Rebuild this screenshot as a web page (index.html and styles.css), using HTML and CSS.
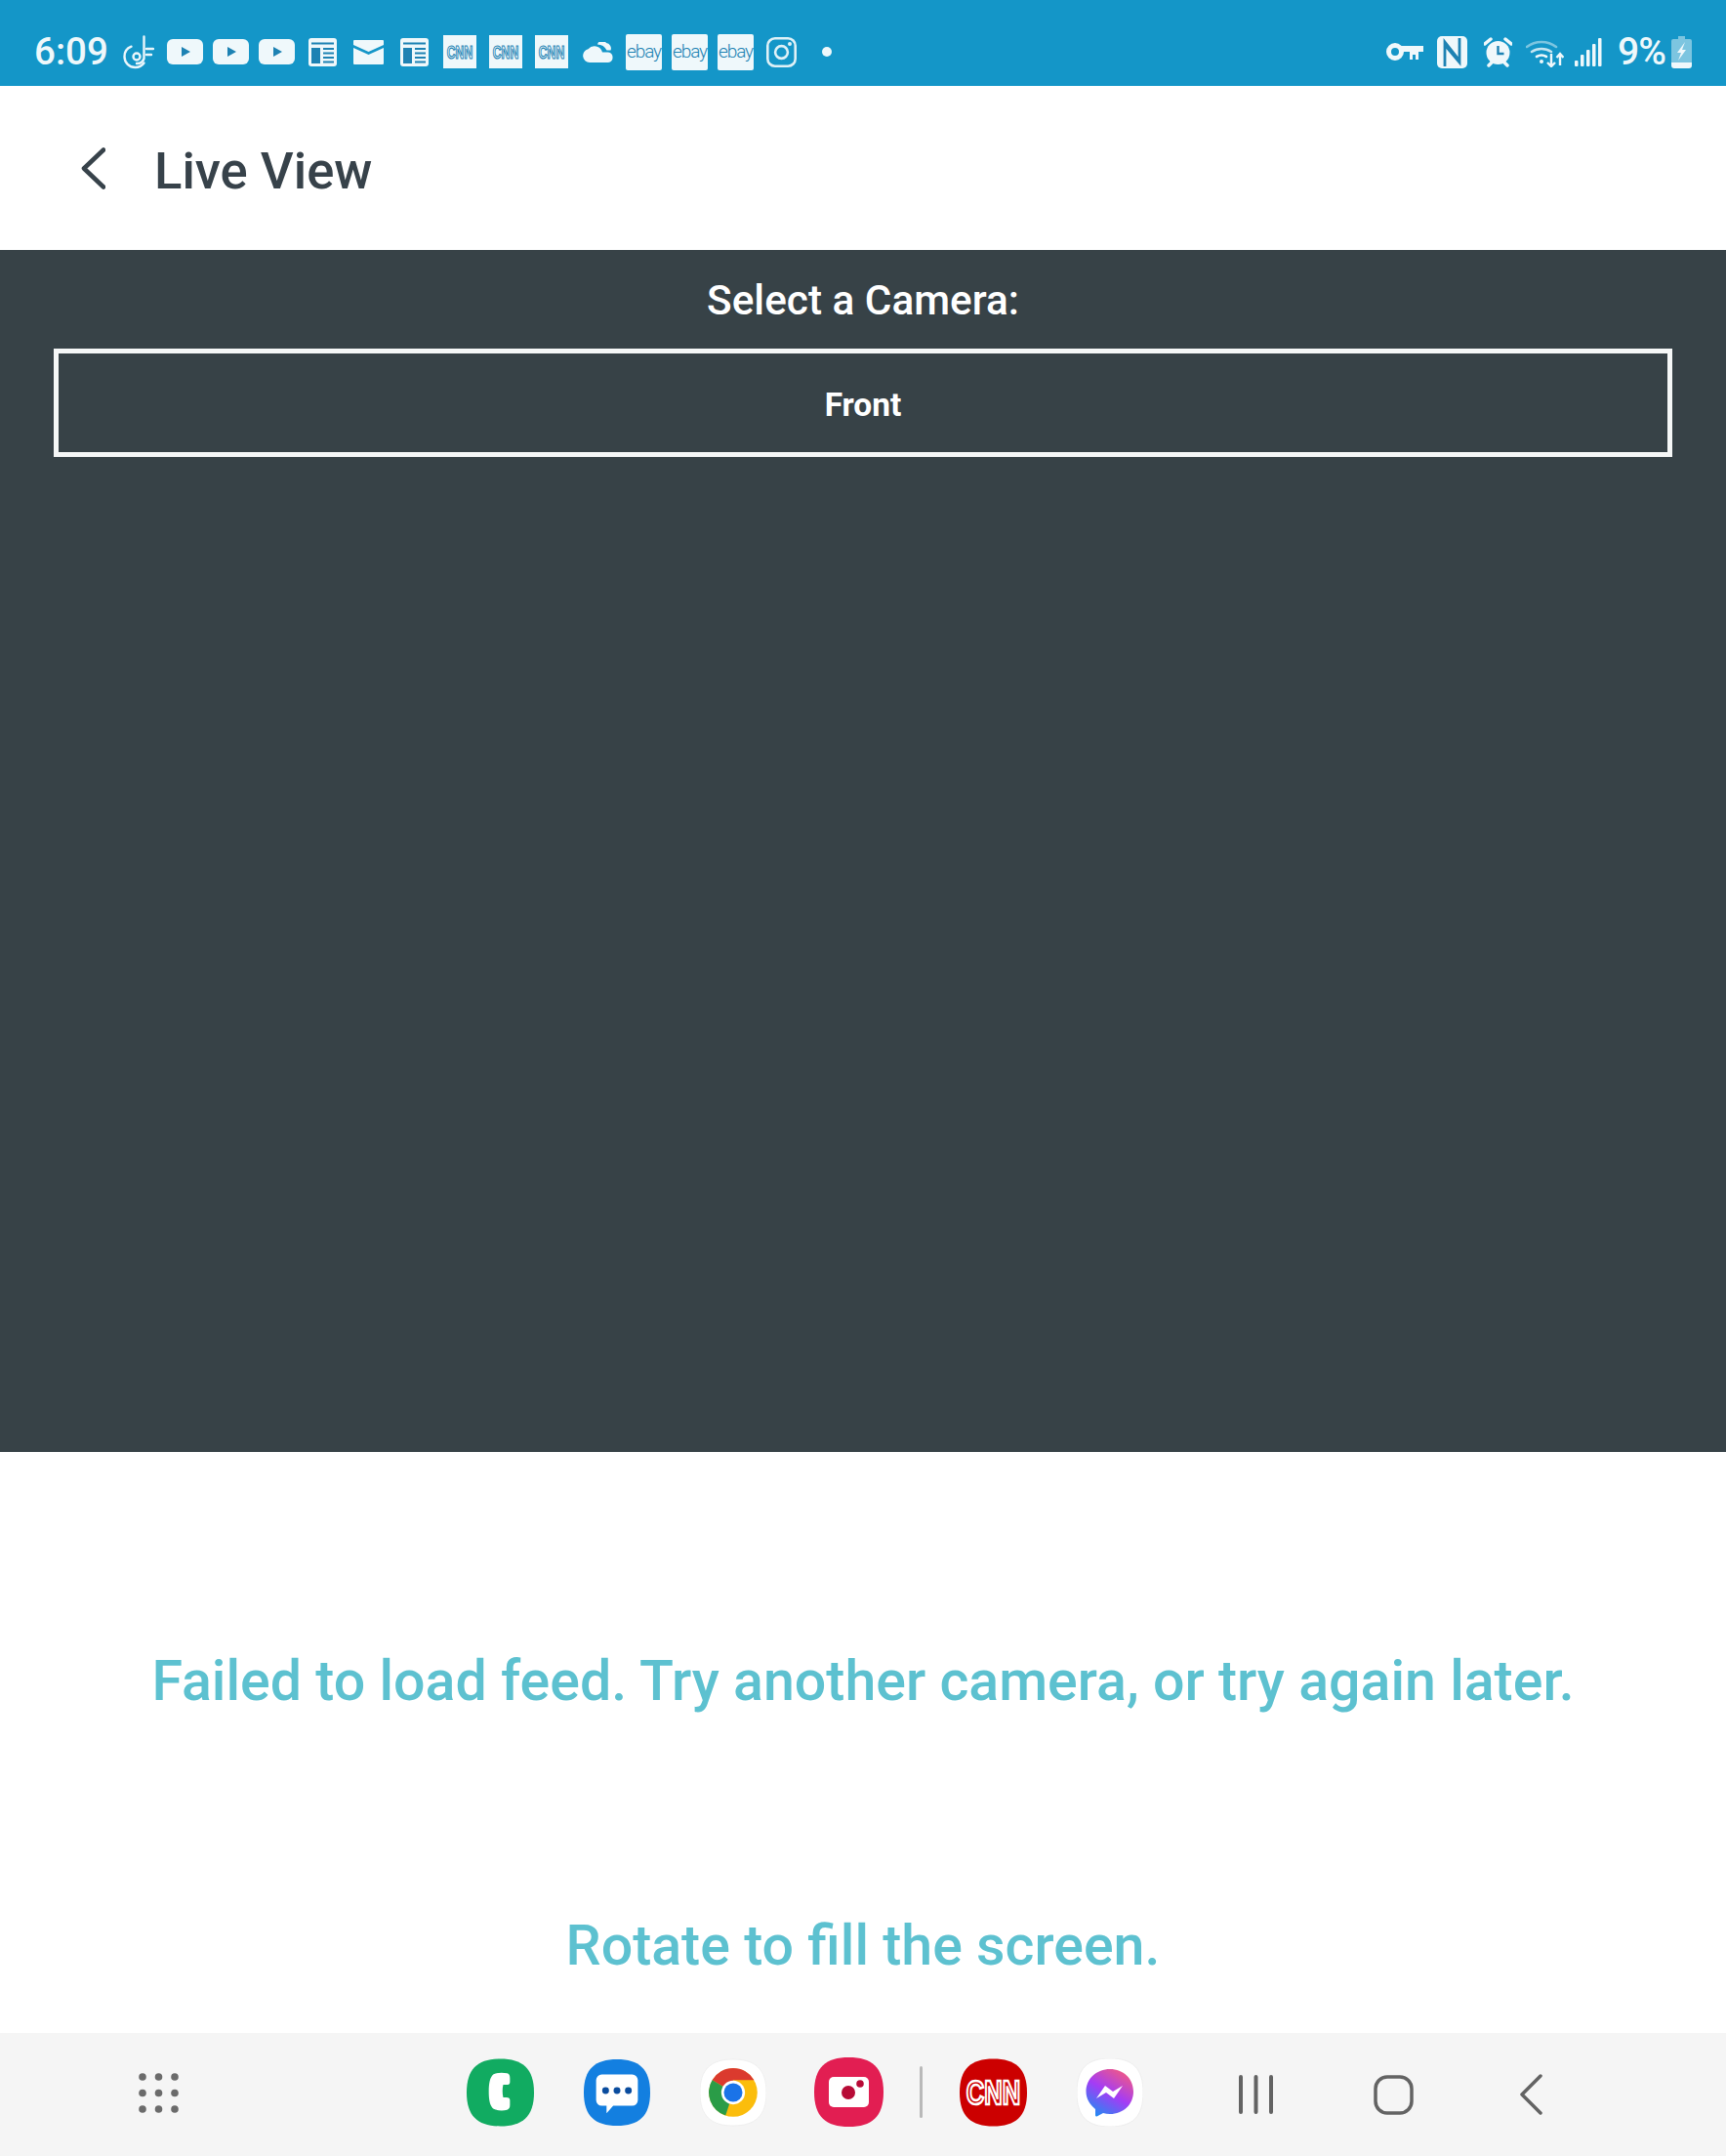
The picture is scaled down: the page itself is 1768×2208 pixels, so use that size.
FILE: index.html
```html
<!DOCTYPE html>
<html lang="en">
<head>
<meta charset="utf-8">
<title>Live View</title>
<link rel="stylesheet" href="styles.css">
</head>
<body>
<div class="page">
  <header class="status">
    <div class="status-left">
      <span class="time">6:09</span>
      <svg class="si tiktok" viewBox="0 0 32 35"><g fill="none" stroke="#eaf6fb" stroke-width="2.400" stroke-linecap="round"><path d="M8.500 11.700A11 11 0 0 0 1.500 22A11 11 0 0 0 12.500 33A11 11 0 0 0 21.500 28.500"/><path d="M21.500 1.500V24A7.500 7.500 0 0 1 14 29"/><path d="M24 14h7M24 20h5"/><circle cx="14" cy="22" r="3.500"/></g></svg>
      <svg class="si yt" viewBox="0 0 37 26"><rect width="37" height="26" rx="6" fill="#eff8fb"/><path d="M15 8l9 5-9 5z" fill="#1d82b3"/></svg>
      <svg class="si yt g10" viewBox="0 0 37 26"><rect width="37" height="26" rx="6" fill="#eff8fb"/><path d="M15 8l9 5-9 5z" fill="#1d82b3"/></svg>
      <svg class="si yt g10" viewBox="0 0 37 26"><rect width="37" height="26" rx="6" fill="#eff8fb"/><path d="M15 8l9 5-9 5z" fill="#1d82b3"/></svg>
      <svg class="si news g14" viewBox="0 0 29 29"><rect width="29" height="29" rx="3" fill="#eff8fb"/><path d="M3 4.500h23v2H3zM3 10h9v16H3z" fill="#1d82b3"/><path d="M15 10h11v2H15zM15 14.500h11v2H15zM15 19h11v2H15zM15 23.500h11v2H15z" fill="#1d82b3"/></svg>
      <svg class="si mail g17" viewBox="0 0 31 25"><path d="M1 0h29a1 1 0 0 1 1 1v4L15.500 12 0 5V1a1 1 0 0 1 1-1zM0 8l15.500 7L31 8v16a1 1 0 0 1-1 1H1a1 1 0 0 1-1-1z" fill="#eff8fb"/></svg>
      <svg class="si news g17" viewBox="0 0 29 29"><rect width="29" height="29" rx="3" fill="#eff8fb"/><path d="M3 4.500h23v2H3zM3 10h9v16H3z" fill="#1d82b3"/><path d="M15 10h11v2H15zM15 14.500h11v2H15zM15 19h11v2H15zM15 23.500h11v2H15z" fill="#1d82b3"/></svg>
      <svg class="si cnn g15" viewBox="0 0 34 34"><rect width="34" height="34" fill="#eff8fb"/><text transform="translate(17 23.500) scale(.68 1)" text-anchor="middle" class="cnn-small">CNN</text></svg>
      <svg class="si cnn g13" viewBox="0 0 34 34"><rect width="34" height="34" fill="#eff8fb"/><text transform="translate(17 23.500) scale(.68 1)" text-anchor="middle" class="cnn-small">CNN</text></svg>
      <svg class="si cnn g13" viewBox="0 0 34 34"><rect width="34" height="34" fill="#eff8fb"/><text transform="translate(17 23.500) scale(.68 1)" text-anchor="middle" class="cnn-small">CNN</text></svg>
      <svg class="si cloud g15" viewBox="0 0 31 21"><path d="M15 2.500a5 5 0 0 1 9-1.500 5.500 5.500 0 0 1 4.500 7.500H24.500A11 11 0 0 0 15 2.500z" fill="#eff8fb"/><path d="M7 21a7 7 0 0 1-1.500-13.800A8.500 8.500 0 0 1 20 10.500h6a5.300 5.300 0 0 1 0 10.500z" fill="#eff8fb"/></svg>
      <span class="tile ebay g13">ebay</span>
      <span class="tile ebay g10">ebay</span>
      <span class="tile ebay g10">ebay</span>
      <svg class="si insta g13" viewBox="0 0 31 31"><g fill="none" stroke="#dff1f7" stroke-width="2.600"><rect x="1.300" y="1.300" width="28.400" height="28.400" rx="7.500"/><circle cx="15.500" cy="15.500" r="6.400"/></g><circle cx="24" cy="7" r="2" fill="#dff1f7"/></svg>
      <span class="dot"></span>
    </div>
    <div class="status-right">
      <svg class="si key" viewBox="0 0 38 18"><circle cx="9" cy="9" r="6.500" fill="none" stroke="#eff8fb" stroke-width="5"/><path d="M15 3h23v6h-5v8h-3v-5h-3v5h-3V9h-9z" fill="#eff8fb"/></svg>
      <svg class="si nfc" viewBox="0 0 31 33"><path d="M5 0h21a5 5 0 0 1 5 5v23a5 5 0 0 1-5 5H5a5 5 0 0 1-5-5V5a5 5 0 0 1 5-5z" fill="#eff8fb"/><path d="M8 31V6l15 19M23 2v25L8 9" fill="none" stroke="#1d82b3" stroke-width="2.800"/></svg>
      <svg class="si alarm" viewBox="0 0 29 31"><circle cx="14.500" cy="16" r="12" fill="#eff8fb"/><path d="M1 7l6-5M28 7l-6-5M5 29l3-3M24 29l-3-3" stroke="#eff8fb" stroke-width="3.500" stroke-linecap="round"/><path d="M14.500 9v8h6" fill="none" stroke="#1d82b3" stroke-width="2.400"/></svg>
      <svg class="si wifi" viewBox="0 0 39 31"><path d="M1 10a25 25 0 0 1 30 0" fill="none" stroke="#7cc5e0" stroke-width="2.600" stroke-linecap="round"/><path d="M6 15a18 18 0 0 1 20 0" fill="none" stroke="#c5e5f1" stroke-width="2.600" stroke-linecap="round"/><path d="M11 20a10 10 0 0 1 10 0" fill="none" stroke="#eff8fb" stroke-width="2.600" stroke-linecap="round"/><circle cx="16" cy="25" r="2" fill="#eff8fb"/><path d="M26 17v13M22 26l4 4 4-4M35 29V17M31.500 21l3.500-4 3.500 4" fill="none" stroke="#eff8fb" stroke-width="2.400"/></svg>
      <svg class="si signal" viewBox="0 0 28 29"><g fill="#eff8fb"><rect x="0" y="23" width="3.500" height="6" rx="1"/><rect x="6" y="17" width="3.500" height="12" rx="1"/><rect x="12" y="12" width="3.500" height="17" rx="1"/><rect x="18" y="6" width="3.500" height="23" rx="1"/><rect x="24" y="0" width="3.500" height="29" rx="1"/></g></svg>
      <span class="pct">9%</span>
      <svg class="si battery" viewBox="0 0 21 33"><path d="M7 0h7v3H7z" fill="#7cc5e0"/><path d="M2 3h17a2 2 0 0 1 2 2v22H0V5a2 2 0 0 1 2-2z" fill="#7cc5e0"/><path d="M0 27h21v3a3 3 0 0 1-3 3H3a3 3 0 0 1-3-3z" fill="#eff8fb"/><path d="M14 6l-8 11h4l-3 8 8-11h-4l3-8z" fill="#eff8fb"/></svg>
    </div>
  </header>

  <div class="appbar">
    <svg class="back" viewBox="0 0 25 43"><path d="M23 2.500L3 21.500 23 40.500" fill="none" stroke="#37424a" stroke-width="4.600" stroke-linecap="round" stroke-linejoin="round"/></svg>
    <h1 class="title">Live View</h1>
  </div>

  <section class="feed">
    <h2 class="feed-label">Select a Camera:</h2>
    <div class="select">Front</div>
  </section>

  <section class="messages">
    <p class="msg msg-fail">Failed to load feed. Try another camera, or try again later.</p>
    <p class="msg msg-rotate">Rotate to fill the screen.</p>
  </section>

  <nav class="navbar">
    <svg class="dots" viewBox="0 0 41 41"><g fill="#6b6b6b"><circle cx="4" cy="4" r="3.800"/><circle cx="20.500" cy="4" r="3.800"/><circle cx="37" cy="4" r="3.800"/><circle cx="4" cy="20.500" r="3.800"/><circle cx="20.500" cy="20.500" r="3.800"/><circle cx="37" cy="20.500" r="3.800"/><circle cx="4" cy="37" r="3.800"/><circle cx="20.500" cy="37" r="3.800"/><circle cx="37" cy="37" r="3.800"/></g></svg>
    <svg class="app app-phone" viewBox="0 0 70 70"><path d="M35 0C58 0 70 10 70 35S58 70 35 70 0 60 0 35 12 0 35 0z" fill="#11ab61"/><path d="M28 16c4-2 10-2 14-1 2 .5 3 2 3 5v4c0 2-1 3-4 3h-3c-1 4-1 9 0 13h3c3 0 4 1 4 3v5c0 3-1 4-3 5-4 1-10 1-14-1-4-3-5-10-5-18s1-15 5-18z" fill="#fff"/></svg>
    <svg class="app app-msg" viewBox="0 0 70 70"><path d="M35 0C58 0 70 10 70 35S58 70 35 70 0 60 0 35 12 0 35 0z" fill="#137fe0"/><path d="M19 16h32a6 6 0 0 1 6 6v21a6 6 0 0 1-6 6H31l-7 8v-8h-5a6 6 0 0 1-6-6V22a6 6 0 0 1 6-6z" fill="#fff"/><g fill="#0a4c9e"><circle cx="23" cy="33" r="3.600"/><circle cx="35" cy="33" r="3.600"/><circle cx="47" cy="33" r="3.600"/></g></svg>
    <svg class="app app-chrome" viewBox="0 0 70 70"><path d="M35 0C58 0 70 10 70 35S58 70 35 70 0 60 0 35 12 0 35 0z" fill="#fff" stroke="#eeeeee"/><circle cx="35" cy="35" r="25.500" fill="#fbbd0c"/><path d="M35 35L12.900 22A25.500 25.500 0 0 1 57.100 22H35z" fill="#db3a2e"/><path d="M12.900 22A25.500 25.500 0 0 0 27 59.300L35 35z" fill="#2a9c47"/><circle cx="35" cy="35" r="12.500" fill="#fff"/><circle cx="35" cy="35" r="9.800" fill="#1a73e8"/></svg>
    <svg class="app app-cam" viewBox="0 0 71 71"><path d="M35.500 0C59 0 71 10 71 35.500S59 71 35.500 71 0 61 0 35.500 12 0 35.500 0z" fill="#e21e52"/><rect x="15" y="20" width="41" height="31" rx="5" fill="#fff"/><circle cx="35" cy="36" r="7" fill="#b70b36"/><circle cx="47" cy="27" r="3.800" fill="#b70b36"/></svg>
    <span class="divider"></span>
    <svg class="app app-cnn" viewBox="0 0 70 70"><path d="M35 0C58 0 70 10 70 35S58 70 35 70 0 60 0 35 12 0 35 0z" fill="#cc0000"/><text transform="translate(35 47.500) scale(.74 1)" text-anchor="middle" class="cnn-big">CNN</text></svg>
    <svg class="app app-messenger" viewBox="0 0 68 70"><defs><linearGradient id="mg" x1="0.200" y1="1" x2="0.800" y2="0"><stop offset="0" stop-color="#1f8cf2"/><stop offset="0.500" stop-color="#a43cf5"/><stop offset="1" stop-color="#f45a80"/></linearGradient></defs><path d="M34 0C57 0 68 10 68 35S57 70 34 70 0 60 0 35 11 0 34 0z" fill="#fff" stroke="#eeeeee"/><path d="M34 11c13.500 0 24 9.600 24 23S47.500 57 34 57c-2.500 0-4.800-.3-7-1l-6 3.300c-1 .5-2 0-2-1.300v-6C13 47 9.500 41 9.500 34 9.500 20.600 20.500 11 34 11z" fill="url(#mg)"/><path d="M20 41l9-13 8 6 10-6-9 13-8-6z" fill="#fff"/></svg>
    <svg class="ctl ctl-recent" viewBox="0 0 37 40"><path d="M3 2v36M18.500 2v36M34 2v36" stroke="#636363" stroke-width="4" stroke-linecap="round"/></svg>
    <svg class="ctl ctl-home" viewBox="0 0 41 41"><rect x="2" y="2" width="37" height="37" rx="12" fill="none" stroke="#636363" stroke-width="3.500"/></svg>
    <svg class="ctl ctl-back" viewBox="0 0 23 42"><path d="M21 2L2 21l19 19" fill="none" stroke="#636363" stroke-width="3.500" stroke-linecap="round" stroke-linejoin="round"/></svg>
  </nav>
</div>
</body>
</html>
```
FILE: styles.css
```css
* { box-sizing: border-box; }
html, body { margin: 0; padding: 0; }
body { background: #fff; font-family: Roboto, "Liberation Sans", sans-serif; }
.page { width: 1768px; height: 2208px; display: flex; flex-direction: column; overflow: hidden; }

.status { height: 88px; flex: none; background: #1496c8; display: flex; align-items: center; justify-content: space-between; padding: 18px 35px 0 35px; color: #eff8fb; }
.status-left, .status-right { display: flex; align-items: center; }
.si { display: block; flex: none; }
.time { font-size: 38.500px; font-weight: 500; line-height: 1; margin-right: 17px; width: 74px; }
.tiktok { width: 32px; height: 35px; margin-right: 13px; }
.yt { width: 37px; height: 26px; }
.news { width: 29px; height: 29px; }
.mail { width: 31px; height: 25px; }
.g10 { margin-left: 10px; }
.g13 { margin-left: 13px; }
.g14 { margin-left: 14px; }
.g15 { margin-left: 15px; }
.g17 { margin-left: 17px; }
.tile { flex: none; background: #eff8fb; color: #1d82b3; display: flex; align-items: center; justify-content: center; }
.cnn { width: 34px; height: 34px; }
.cnn-small { font-family: "Liberation Sans", sans-serif; font-size: 18px; font-weight: 700; fill: #eff8fb; stroke: #1d82b3; stroke-width: 1.200; }
.ebay { width: 37px; height: 37px; border-radius: 2px; font-size: 19px; font-weight: 300; letter-spacing: -1.100px; padding-bottom: 2px; }
.cloud { width: 31px; height: 21px; }
.insta { width: 31px; height: 31px; }
.dot { width: 10px; height: 10px; border-radius: 50%; background: #eff8fb; margin-left: 26px; flex: none; }
.key { width: 38px; height: 18px; margin-right: 14px; }
.nfc { width: 31px; height: 33px; margin-right: 17px; }
.alarm { width: 29px; height: 31px; margin-right: 14px; }
.wifi { width: 39px; height: 31px; margin-right: 11px; }
.signal { width: 28px; height: 29px; margin-right: 16px; }
.pct { font-size: 39px; font-weight: 500; line-height: 1; width: 49px; margin-right: 6px; letter-spacing: -1px; white-space: nowrap; }
.battery { width: 21px; height: 33px; }

.appbar { height: 168px; flex: none; background: #fff; display: flex; align-items: center; padding-left: 83px; }
.back { width: 25px; height: 43px; flex: none; margin-right: 50px; }
.title { margin: 7px 0 0; font-size: 52.600px; font-weight: 500; line-height: 1; color: #37424a; }

.feed { height: 1231px; flex: none; background: #374247; padding: 28px 55px 0; }
.feed-label { margin: 0 0 26px; height: 47px; text-align: center; font-size: 42.300px; line-height: 47px; font-weight: 500; color: #fff; }
.select { height: 111px; border: 5px solid #f5f7f7; padding-top: 3px; display: flex; align-items: center; justify-content: center; font-size: 33.500px; font-weight: 700; color: #fff; }

.messages { flex: 1; background: #fff; display: flex; flex-direction: column; align-items: center; padding-top: 199px; }
.msg { margin: 0; font-size: 57.300px; line-height: 72px; font-weight: 500; color: #5dc1d0; text-align: center; }
.msg-rotate { margin-top: 199px; }

.navbar { height: 126px; flex: none; background: #f5f5f5; display: flex; align-items: center; padding: 0 0 5px 142px; }
.dots { width: 41px; height: 41px; margin: 2px 295px 0 0; flex: none; }
.app { display: block; flex: none; }
.app-phone { width: 69px; height: 70px; margin-right: 51px; }
.app-msg { width: 68px; height: 70px; margin-right: 51px; }
.app-chrome { width: 68px; height: 70px; margin-right: 49px; }
.app-cam { width: 71px; height: 71px; margin-right: 37px; }
.divider { width: 3px; height: 53px; background: #b9b9b9; border-radius: 2px; margin-right: 38px; flex: none; }
.app-cnn { width: 69px; height: 70px; margin-right: 51px; }
.cnn-big { font-family: "Liberation Sans", sans-serif; font-size: 35px; font-weight: 700; fill: #cc0000; stroke: #fff; stroke-width: 2.600; }
.app-messenger { width: 68px; height: 70px; margin-right: 97px; }
.ctl { display: block; flex: none; margin-top: 5px; }
.ctl-recent { width: 37px; height: 40px; margin-right: 102px; }
.ctl-home { width: 41px; height: 41px; margin-right: 109px; }
.ctl-back { width: 23px; height: 42px; }
```
